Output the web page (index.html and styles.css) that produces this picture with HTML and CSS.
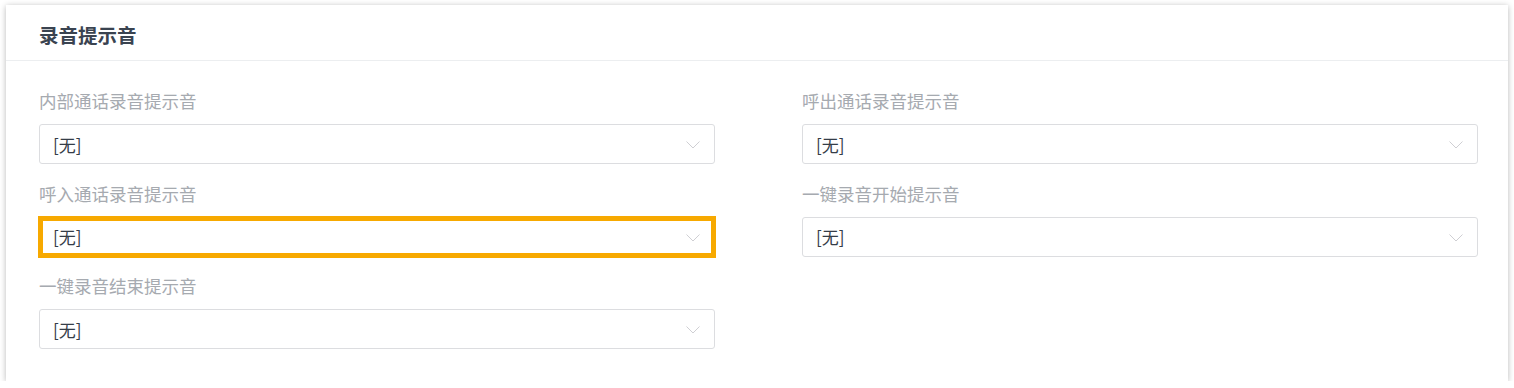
FILE: index.html
```html
<!DOCTYPE html>
<html lang="zh-CN">
<head>
<meta charset="utf-8">
<title>录音提示音</title>
<link rel="stylesheet" href="styles.css">
</head>
<body>
<section class="card">
  <header class="card-head"><h2 class="card-title">录音提示音</h2></header>
  <div class="card-body">
    <div class="field">
      <label class="field-label">内部通话录音提示音</label>
      <div class="select"><span class="select-value">[无]</span><svg class="chev" width="14" height="8" viewBox="0 0 14 8"><path d="M0.5 0.5 L7 7 L13.5 0.5" fill="none" stroke="#cfcfd3" stroke-width="1"/></svg></div>
    </div>
    <div class="field">
      <label class="field-label">呼出通话录音提示音</label>
      <div class="select"><span class="select-value">[无]</span><svg class="chev" width="14" height="8" viewBox="0 0 14 8"><path d="M0.5 0.5 L7 7 L13.5 0.5" fill="none" stroke="#cfcfd3" stroke-width="1"/></svg></div>
    </div>
    <div class="field">
      <label class="field-label">呼入通话录音提示音</label>
      <div class="select select-highlight"><span class="select-value">[无]</span><svg class="chev" width="14" height="8" viewBox="0 0 14 8"><path d="M0.5 0.5 L7 7 L13.5 0.5" fill="none" stroke="#cfcfd3" stroke-width="1"/></svg></div>
    </div>
    <div class="field">
      <label class="field-label">一键录音开始提示音</label>
      <div class="select"><span class="select-value">[无]</span><svg class="chev" width="14" height="8" viewBox="0 0 14 8"><path d="M0.5 0.5 L7 7 L13.5 0.5" fill="none" stroke="#cfcfd3" stroke-width="1"/></svg></div>
    </div>
    <div class="field">
      <label class="field-label">一键录音结束提示音</label>
      <div class="select"><span class="select-value">[无]</span><svg class="chev" width="14" height="8" viewBox="0 0 14 8"><path d="M0.5 0.5 L7 7 L13.5 0.5" fill="none" stroke="#cfcfd3" stroke-width="1"/></svg></div>
    </div>
  </div>
</section>
</body>
</html>
```

FILE: styles.css
```css
html, body {
  margin: 0;
  padding: 0;
  background: #ffffff;
}
body {
  padding: 5px 6px 0 6px;
  font-family: "Noto Sans CJK SC", "Noto Sans", sans-serif;
}
.card {
  width: 1502px;
  height: 376px;
  box-sizing: border-box;
  background: #fff;
  box-shadow: 0 1px 6px rgba(0, 0, 0, 0.28);
}
.card-head {
  height: 56px;
  box-sizing: border-box;
  border-bottom: 1px solid #eceef0;
  padding: 0 0 0 33px;
  display: flex;
  align-items: center;
}
.card-title {
  margin: 0;
  font-size: 19.5px;
  font-weight: 700;
  color: #3a4350;
  line-height: 1;
  padding-top: 4px;
}
.card-body {
  padding: 28px 30px 0 33px;
  display: grid;
  grid-template-columns: 676px 676px;
  column-gap: 87px;
  row-gap: 17.5px;
}
.field {
  display: flex;
  flex-direction: column;
}
.field-label {
  display: block;
  font-size: 17.5px;
  line-height: 24px;
  height: 24px;
  color: #a6aab0;
  margin-bottom: 11px;
}
.select {
  height: 40px;
  box-sizing: border-box;
  border: 1px solid #dcdde0;
  border-radius: 3px;
  display: flex;
  align-items: center;
  justify-content: space-between;
  padding: 0 14px 0 13px;
}
.select-value {
  font-size: 17px;
  color: #353d48;
  line-height: 1;
}
.chev {
  display: block;
  margin-top: 2px;
}
.select-highlight {
  border-radius: 0;
  outline: 5px solid #f7a900;
  outline-offset: -4px;
}
```
